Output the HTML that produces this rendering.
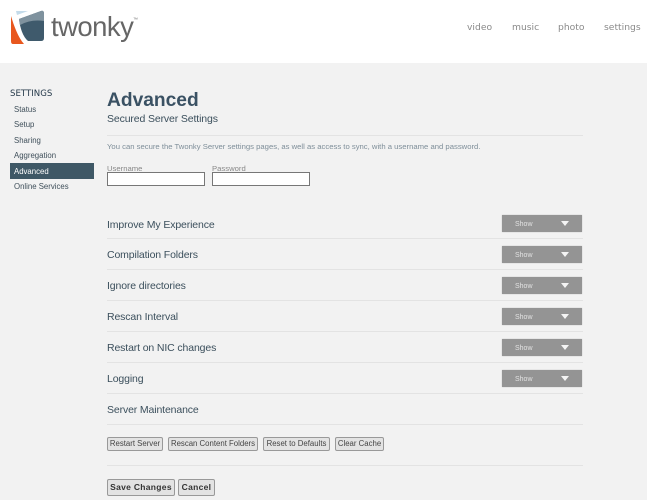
<!DOCTYPE html>
<html><head><meta charset="utf-8"><style>
html,body{margin:0;padding:0}
body{width:647px;height:500px;overflow:hidden;background:#f2f2f2;position:relative;font-family:"Liberation Sans",sans-serif}
.a{position:absolute;white-space:nowrap}
#hd{left:0;top:0;width:647px;height:63px;background:#fff}
.n{top:21px;font:9.2px/14px "DejaVu Sans",sans-serif;color:#8a8a8a}
.s{left:14px;font-size:7.8px;line-height:12px;color:#3f4f5a}
.r{left:107px;font-size:10.5px;line-height:14px;color:#3b4f5c;letter-spacing:-.13px}
.l{left:107px;width:476px;height:1px;background:#e3e3e3}
.sb{left:502px;width:80px;height:17px;background:#949494;box-shadow:0 0 1px #bbb}
.sb span{position:absolute;left:13px;top:5px;font-size:7px;line-height:9px;color:#e2e2e2}
.sb i{position:absolute;left:59px;top:6px;width:0;height:0;border-left:4.5px solid transparent;border-right:4.5px solid transparent;border-top:5px solid #f4f4f4}
.b{top:437px;height:12px;background:#e3e3e3;border:1px solid #999;border-radius:2px;font-size:7.8px;line-height:12px;color:#444;text-align:center}
.c{top:479px;height:15px;background:#e3e3e3;border:1px solid #999;border-radius:2px;font-size:8.5px;font-weight:bold;line-height:15px;color:#333;text-align:center;letter-spacing:.3px}
.i{top:172px;height:12px;border:1px solid #777;background:#fff}
</style></head><body>
<div class="a" id="hd"></div>
<svg class="a" style="left:11px;top:10px" width="36" height="35" viewBox="0 0 36 35">
<path d="M5 1L17 1L6 5Z" fill="#c4dbea"/>
<path d="M0 6L0 31Q0 34 2 34L13 34C7 27 3 16 0 6Z" fill="#e8571e"/>
<path d="M8 9L30 1Q33 0 33 4L33 28Q33 31 30 31L17 31C12 27 9 18 8 9Z" fill="#3f5a6c"/>
<path d="M8 9L30 1Q33 0 33 4L33 11Q20 9 9 15Z" fill="#7f929e"/>
</svg>
<div class="a" style="left:51px;top:8px;font-size:27.5px;line-height:38px;color:#666;letter-spacing:-.55px">twonky</div>
<div class="a" style="left:133px;top:17px;font-size:5px;line-height:6px;color:#777">™</div>
<div class="a n" style="left:467px">video</div>
<div class="a n" style="left:512px">music</div>
<div class="a n" style="left:558px">photo</div>
<div class="a n" style="left:604px">settings</div>

<div class="a" style="left:10px;top:88px;font:8.6px/13px 'DejaVu Sans',sans-serif;color:#25394a">SETTINGS</div>
<div class="a s" style="top:104px">Status</div>
<div class="a s" style="top:119px">Setup</div>
<div class="a s" style="top:135px">Sharing</div>
<div class="a s" style="top:150px">Aggregation</div>
<div class="a" style="left:10px;top:163px;width:84px;height:16px;background:#3f5866"></div>
<div class="a s" style="top:166px;color:#fff">Advanced</div>
<div class="a s" style="top:181px">Online Services</div>

<div class="a" style="left:107px;top:89px;font-size:19.2px;font-weight:bold;line-height:24px;color:#3a5163">Advanced</div>
<div class="a" style="left:107px;top:112px;font-size:10.5px;line-height:14px;color:#3b4f5c;letter-spacing:-.13px">Secured Server Settings</div>
<div class="a l" style="top:135px"></div>
<div class="a" style="left:107px;top:141px;font-size:7.7px;line-height:11px;color:#7e8e99">You can secure the Twonky Server settings pages, as well as access to sync, with a username and password.</div>
<div class="a" style="left:107px;top:163px;font-size:7.7px;line-height:11px;color:#888">Username</div>
<div class="a" style="left:212px;top:163px;font-size:7.7px;line-height:11px;color:#888">Password</div>
<div class="a i" style="left:107px;width:96px"></div>
<div class="a i" style="left:212px;width:96px"></div>

<div class="a r" style="top:218px">Improve My Experience</div>
<div class="a sb" style="top:215px"><span>Show</span><i></i></div>
<div class="a l" style="top:238px"></div>
<div class="a r" style="top:248px">Compilation Folders</div>
<div class="a sb" style="top:246px"><span>Show</span><i></i></div>
<div class="a l" style="top:269px"></div>
<div class="a r" style="top:279px">Ignore directories</div>
<div class="a sb" style="top:277px"><span>Show</span><i></i></div>
<div class="a l" style="top:300px"></div>
<div class="a r" style="top:310px">Rescan Interval</div>
<div class="a sb" style="top:308px"><span>Show</span><i></i></div>
<div class="a l" style="top:331px"></div>
<div class="a r" style="top:341px">Restart on NIC changes</div>
<div class="a sb" style="top:339px"><span>Show</span><i></i></div>
<div class="a l" style="top:362px"></div>
<div class="a r" style="top:372px">Logging</div>
<div class="a sb" style="top:370px"><span>Show</span><i></i></div>
<div class="a l" style="top:393px"></div>
<div class="a r" style="top:403px">Server Maintenance</div>
<div class="a l" style="top:424px"></div>

<div class="a b" style="left:107px;width:54px">Restart Server</div>
<div class="a b" style="left:168px;width:88px">Rescan Content Folders</div>
<div class="a b" style="left:263px;width:65px">Reset to Defaults</div>
<div class="a b" style="left:335px;width:47px">Clear Cache</div>
<div class="a l" style="top:465px"></div>
<div class="a c" style="left:107px;width:66px">Save Changes</div>
<div class="a c" style="left:178px;width:35px">Cancel</div>
</body></html>
